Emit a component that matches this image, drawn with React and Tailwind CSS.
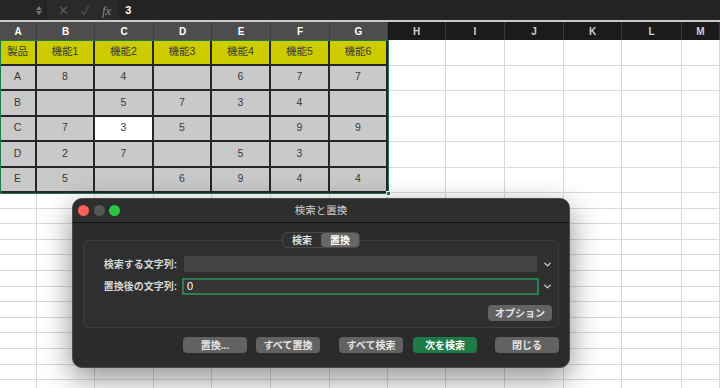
import { ChevronDown } from "lucide-react";

const COLS = ["A", "B", "C", "D", "E", "F", "G", "H", "I", "J", "K", "L", "M"];
const WIDTHS = [37, 58, 59, 58, 59, 59, 58, 58, 59, 59, 58, 60, 38];

const TABLE = [
  ["製品", "機能1", "機能2", "機能3", "機能4", "機能5", "機能6"],
  ["A", "8", "4", "", "6", "7", "7"],
  ["B", "", "5", "7", "3", "4", ""],
  ["C", "7", "3", "5", "", "9", "9"],
  ["D", "2", "7", "", "5", "3", ""],
  ["E", "5", "", "6", "9", "4", "4"],
];

const FONT = { fontFamily: '"Liberation Sans", "Noto Sans CJK JP", sans-serif' };

function FormulaBar() {
  return (
    <div className="flex h-[20px] items-center bg-[#2a2a2a] text-[#7a7a7a]">
      <div className="flex h-full w-[46px] items-center justify-end border-r border-[#1c1c1c] bg-[#262626] pr-[3px]">
        <div className="flex flex-col items-center gap-[1px]">
          <span className="block h-0 w-0 border-x-[3px] border-b-[4px] border-x-transparent border-b-[#777]" />
          <span className="block h-0 w-0 border-x-[3px] border-t-[4px] border-x-transparent border-t-[#777]" />
        </div>
      </div>
      <span className="ml-[12px] text-[13px] leading-none text-[#5c5c5c]">✕</span>
      <span className="ml-[12px] text-[13px] leading-none text-[#5c5c5c]">✓</span>
      <span className="ml-[12px] text-[13px] italic leading-none text-[#8a8a8a]" style={{ fontFamily: '"Liberation Serif", serif' }}>
        fx
      </span>
      <div className="ml-[8px] flex h-full flex-1 items-center bg-[#242424] pl-[6px]">
        <span className="text-[11px] font-bold text-white">3</span>
      </div>
    </div>
  );
}

function HeaderRow() {
  return (
    <div className="flex h-[20px] border-t-2 border-[#c9c9c9]">
      {COLS.map((c, i) => (
        <div
          key={c}
          style={{ width: WIDTHS[i] }}
          className={
            "flex shrink-0 items-center justify-center text-[10px] font-bold " +
            (i < 7 ? "bg-[#4d4d4d] text-white border-r border-[#3e3e3e]" : "bg-[#1b1b1b] text-[#d0d0d0] border-r border-[#3a3a3a]")
          }
        >
          {c}
        </div>
      ))}
    </div>
  );
}

function DataRow({ cells, r }) {
  return (
    <div className="flex h-[25.5px]">
      {COLS.map((c, i) => {
        const inTable = i < 7;
        const v = inTable ? cells[i] : "";
        const selected = r === 3 && i === 2;
        let cls = "flex shrink-0 items-center justify-center text-[10.5px] ";
        if (inTable) {
          cls += "border-b-2 border-r-2 border-[#262626] text-[#3a3a3a] ";
          cls += selected ? "bg-white" : r === 0 ? "bg-[#cccc00]" : "bg-[#c9c9c9]";
        } else {
          cls += "bg-white border-r border-b border-[#dadada]";
        }
        return (
          <div key={c} style={{ width: WIDTHS[i] }} className={cls}>
            {v}
          </div>
        );
      })}
    </div>
  );
}

function EmptyRow() {
  return (
    <div className="flex h-[15.6px]">
      {COLS.map((c, i) => (
        <div key={c} style={{ width: WIDTHS[i] }} className="shrink-0 border-b border-r border-[#d9d9d9] bg-white" />
      ))}
    </div>
  );
}

function Btn({ children, className = "", green }) {
  return (
    <div
      className={
        "flex h-[16px] w-[64px] items-center justify-center rounded-[4px] text-[10px] font-bold " +
        (green ? "bg-[#1e7b47] text-white " : "bg-[#626262] text-[#e6e6e6] ") +
        className
      }
    >
      {children}
    </div>
  );
}

function Dialog() {
  return (
    <div className="absolute left-[72px] top-[198px] flex h-[170px] w-[498px] flex-col overflow-hidden rounded-[10px] border border-[#4a4a4a] bg-[#2b2b2b] shadow-[0_10px_30px_rgba(0,0,0,0.45)]">
      <div className="relative flex h-[24px] items-center border-b border-[#111] bg-[#2e2e2e] pl-[5px]">
        <div className="flex gap-[4.5px]">
          <span className="h-[11px] w-[11px] rounded-full bg-[#fe5f57]" />
          <span className="h-[11px] w-[11px] rounded-full bg-[#575757]" />
          <span className="h-[11px] w-[11px] rounded-full bg-[#2ac840]" />
        </div>
        <div className="absolute inset-0 flex items-center justify-center text-[10.5px] text-[#d0d0d0]">検索と置換</div>
      </div>

      <div className="flex flex-col px-[10px] pt-[9px]">
        <div className="relative z-10 mx-auto flex h-[16px] items-center rounded-[5px] border border-[#4a4a4a] bg-[#2f2f2f] text-[10px] text-[#e0e0e0]">
          <span className="px-[9px] font-bold">検索</span>
          <span className="flex h-[14px] items-center rounded-[4px] bg-[#676767] px-[9px] font-bold text-white">置換</span>
        </div>
        <div className="-mt-[8px] flex h-[88px] flex-col rounded-[4px] border border-[#3d3d3d] bg-[#2f2f2f] pt-[15px]">
          <div className="flex h-[16px] items-center">
            <div className="w-[93px] text-right text-[10px] font-bold text-[#d6d6d6]">検索する文字列:</div>
            <div className="ml-[7px] h-[16px] flex-1 bg-[#434343]" />
            <ChevronDown className="mx-[5px] h-[11px] w-[11px] text-[#cfcfcf]" strokeWidth={3} />
          </div>
          <div className="mt-[6px] flex h-[16px] items-center">
            <div className="w-[93px] text-right text-[10px] font-bold text-[#d6d6d6]">置換後の文字列:</div>
            <div className="ml-[5px] -mr-[2px] flex h-[17px] flex-1 items-center border-2 border-[#2d7d4e] bg-[#353535] pl-[3px] text-[11px] text-white">
              0
            </div>
            <ChevronDown className="mx-[5px] h-[11px] w-[11px] text-[#cfcfcf]" strokeWidth={3} />
          </div>
          <div className="mt-[11px] flex justify-end pr-[6px]">
            <Btn className="w-[63px] h-[15px]">オプション</Btn>
          </div>
        </div>
      </div>

      <div className="mt-[9px] flex pl-[110px]">
        <Btn>置換...</Btn>
        <Btn className="ml-[9px]">すべて置換</Btn>
        <Btn className="ml-[19px]">すべて検索</Btn>
        <Btn green className="ml-[10px]">次を検索</Btn>
        <Btn className="ml-[18px]">閉じる</Btn>
      </div>
    </div>
  );
}

export default function App() {
  return (
    <div className="relative h-[388px] w-[720px] overflow-hidden bg-white" style={FONT}>
      <FormulaBar />
      <HeaderRow />
      <div className="relative">
        {TABLE.map((row, r) => (
          <DataRow key={r} cells={row} r={r} />
        ))}
        <div className="pointer-events-none absolute left-0 top-0 h-[154px] w-[389px] border-[1.5px] border-[#1f7a4a]" />
        <div className="absolute left-[386px] top-[151px] h-[5px] w-[5px] border border-white bg-[#1f7a4a]" />
      </div>
      {Array.from({ length: 13 }).map((_, i) => (
        <EmptyRow key={i} />
      ))}
      <Dialog />
    </div>
  );
}
